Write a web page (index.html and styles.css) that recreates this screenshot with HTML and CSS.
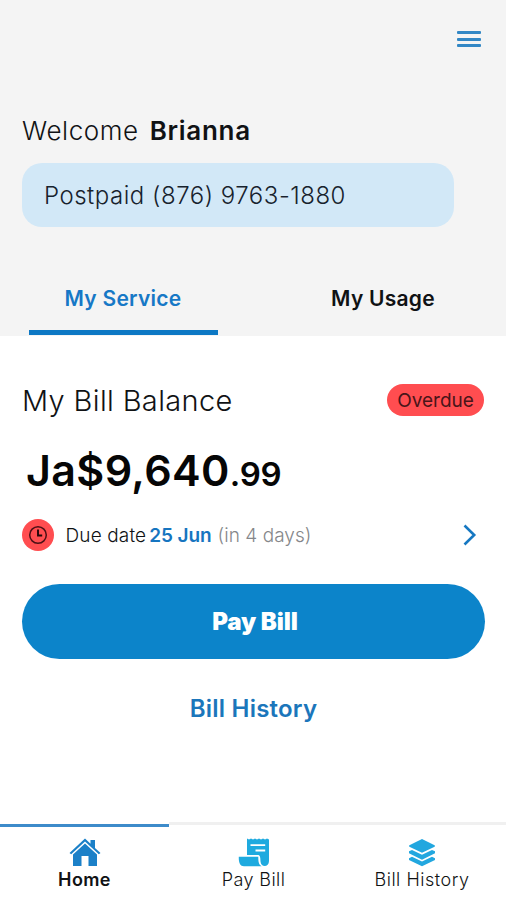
FILE: index.html
```html
<!DOCTYPE html>
<html lang="en">
<head>
<meta charset="utf-8">
<title>My Service</title>
<link rel="stylesheet" href="styles.css">
</head>
<body>
<div class="app">
  <header class="header">
    <button class="menu" aria-label="Menu"><span></span><span></span><span></span></button>
    <h1 class="welcome"><span class="greeting">Welcome</span><span class="name">Brianna</span></h1>
    <div class="account"><span class="account-text">Postpaid (876) 9763-1880</span></div>
    <nav class="tabs">
      <a class="tab active"><span class="tab-service">My Service</span></a>
      <a class="tab"><span class="tab-usage">My Usage</span></a>
    </nav>
  </header>
  <main class="main">
    <div class="balance-head">
      <h2 class="balance-title">My Bill Balance</h2>
      <span class="badge"><span class="badge-text">Overdue</span></span>
    </div>
    <div class="amount"><span class="whole">Ja$9,640</span><span class="cents">.99</span></div>
    <div class="due">
      <span class="clock">
        <svg width="20" height="20" viewBox="0 0 20 20" fill="none" stroke="#4d1015" stroke-width="1.5"><circle cx="10" cy="10" r="8.3"/><path d="M10 4.5V10.5H14.2" stroke="#24080b" stroke-width="1.9"/></svg>
      </span>
      <span class="due-label">Due date</span>
      <span class="due-date">25 Jun</span>
      <span class="due-note">(in 4 days)</span>
      <svg class="chevron" width="14" height="22" viewBox="0 0 14 22" fill="none" stroke="#1678c2" stroke-width="2.6"><path d="M1.5 1.5L11.2 11L1.5 20.5"/></svg>
    </div>
    <button class="pay"><span class="pay-text">Pay Bill</span></button>
    <a class="history"><span class="history-text">Bill History</span></a>
  </main>
  <nav class="bottom">
    <a class="item selected">
      <svg width="32" height="29" viewBox="0 0 32 29"><path fill="#1b80c8" d="M16 .5L21.5 5.7V2H26V10L31.5 15L29.8 16.2L16 3.5L2.2 16.2L.5 15Z"/><path fill="#1b80c8" d="M16 5.5L28 16.5V28H19.5V18H12.5V28H4V16.5Z"/></svg>
      <span class="label-home">Home</span>
    </a>
    <a class="item">
      <svg width="32" height="29" viewBox="0 0 32 29"><path fill="#1eaadf" d="M9 .5L11 1.4L13 .5L15 1.4L17 .5L19 1.4L21 .5L23 1.4L25 .5L27 1.4L29 .5L31 1.4V23C31 29.5 23 29.8 22.5 23.5C22.5 19 21.8 17 20 17H9Z"/><path fill="#1eaadf" d="M.8 18.7H20.3C20.3 23 20.5 26.5 23.7 28.3H6C2 28.3.5 24.2.8 18.7Z"/><path stroke="#fff" stroke-width="1.8" d="M12.5 7.2H27.2M17.5 12.5H27.2"/></svg>
      <span class="label-pay">Pay Bill</span>
    </a>
    <a class="item">
      <svg width="28" height="29" viewBox="0 0 28 29" fill="#22a7df"><path d="M14 1L26.6 7.2Q27.4 8 26.6 8.7L14 14.7L1.4 8.7Q.6 8 1.4 7.2Z"/><path d="M1 13.2L4 12L14 16.8L24 12L27 13.2V15.2L14 21.7L1 15.2Z"/><path d="M1 20.2L4 18.7L14 23.5L24 18.7L27 20.2V22L14 28.2L1 22Z"/></svg>
      <span class="label-history">Bill History</span>
    </a>
  </nav>
</div>
</body>
</html>
```

FILE: styles.css
```css
* { box-sizing: border-box; }
body { margin: 0; background: #fff; color: #101214; font-family: Inter, "Liberation Sans", sans-serif; }
button { border: 0; padding: 0; font: inherit; }
h1, h2 { margin: 0; font-weight: 300; }
svg { display: block; flex: none; }
span { white-space: nowrap; }
.app { width: 506px; height: 900px; display: flex; flex-direction: column; overflow: hidden; }
.header { height: 336px; flex: none; background: #f4f4f4; display: flex; flex-direction: column; padding: 31px 22px 0; }
.menu { align-self: flex-end; width: 24px; height: 16px; margin-right: 3px; background: none; display: flex; flex-direction: column; justify-content: space-between; }
.menu span { height: 3px; border-radius: 1px; background: #3287c5; }
.welcome { margin-top: 68px; height: 31px; line-height: 31px; font-size: 26px; display: flex; gap: 11px; }
.greeting { font-weight: 300; letter-spacing: .58px; }
.name { font-weight: 600; letter-spacing: .7px; }
.account { margin-top: 17px; width: 432px; height: 64px; border-radius: 20px; background: #d2e8f7; display: flex; align-items: center; padding-left: 22px; }
.account-text { font-size: 24px; font-weight: 300; letter-spacing: .52px; color: #17222d; }
.tabs { margin: 35px 0 0 6.5px; height: 74px; display: flex; gap: 71px; }
.tab { width: 189px; height: 73px; display: flex; justify-content: center; line-height: 73px; font-size: 21px; font-weight: 600; letter-spacing: .25px; }
.tab.active { color: #1678c6; border-bottom: 5px solid #0d78c4; }
.main { flex: 1; padding: 47px 22px 0; }
.balance-head { height: 34px; display: flex; align-items: center; justify-content: space-between; }
.balance-title { font-size: 29px; line-height: 35px; letter-spacing: .36px; }
.badge { width: 97px; height: 32px; border-radius: 16px; background: #ff4d50; display: flex; align-items: center; justify-content: center; font-size: 19px; color: #4a1519; }
.amount { margin: 29px 0 0 4px; height: 50px; line-height: 49px; display: flex; align-items: baseline; font-weight: 600; color: #060606; }
.whole { font-size: 43px; letter-spacing: .35px; }
.cents { font-size: 33px; letter-spacing: -.2px; }
.due { margin-top: 23px; height: 32px; display: flex; align-items: center; font-size: 19px; }
.clock { width: 32px; height: 32px; border-radius: 50%; background: #ff4d50; display: flex; align-items: center; justify-content: center; }
.due-label { margin-left: 11.5px; font-weight: 300; letter-spacing: .14px; }
.due-date { margin-left: 3px; font-weight: 600; color: #1675c0; letter-spacing: -.1px; }
.due-note { margin-left: 6px; font-weight: 300; color: #85878a; letter-spacing: .05px; }
.chevron { margin-left: auto; margin-right: 7.5px; }
.pay { margin-top: 33px; width: 463px; height: 75px; border-radius: 38px; background: #0c84ca; color: #fff; font-size: 24px; font-weight: 900; letter-spacing: -.1px; display: flex; align-items: center; justify-content: center; }
.pay-text { padding-left: 3px; }
.history { margin-top: 34px; height: 30px; line-height: 31px; display: flex; justify-content: center; font-size: 24px; font-weight: 600; letter-spacing: .22px; color: #1b76bb; }
.history-text { padding-left: 1px; }
.bottom { height: 78px; flex: none; display: grid; grid-template-columns: 169px 169px 168px; background: #fff; }
.item { border-top: 3px solid #f0f0f0; padding-top: 13px; display: flex; flex-direction: column; align-items: center; font-size: 18px; line-height: 26px; font-weight: 300; letter-spacing: .4px; }
.label-history { letter-spacing: .52px; }
.item.selected { margin-top: 2px; padding-top: 11px; border-color: #3d8bca; font-weight: 600; }
```
